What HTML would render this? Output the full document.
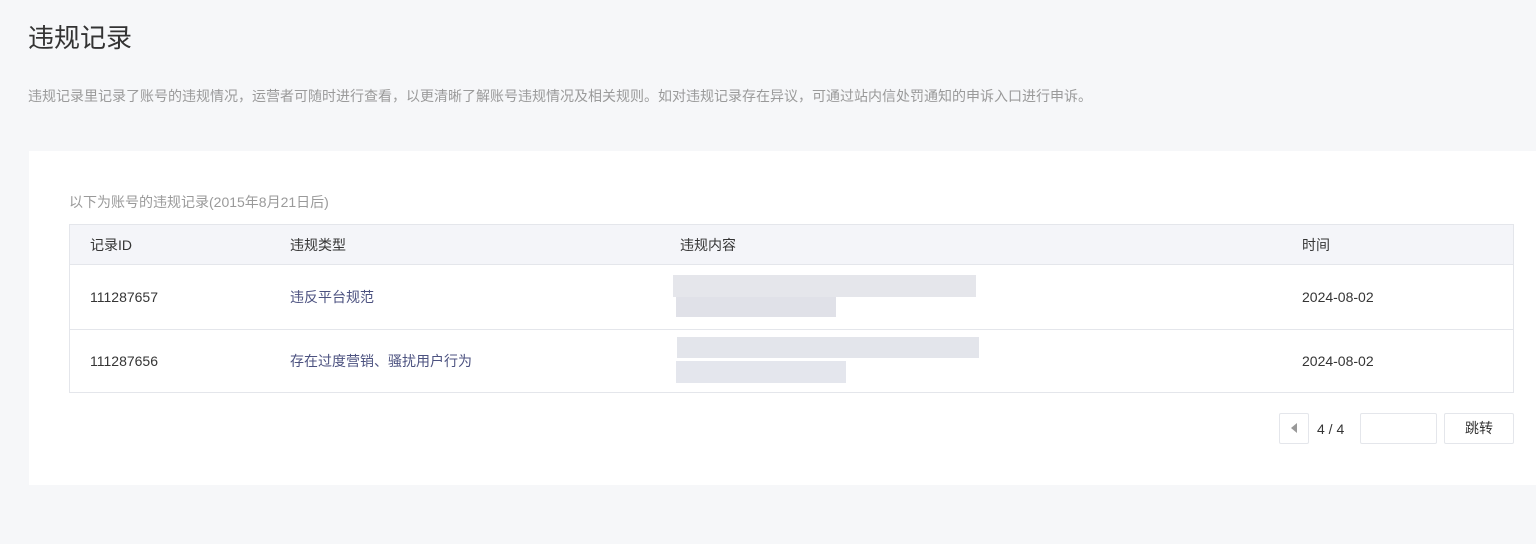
<!DOCTYPE html>
<html><head><meta charset="utf-8"><style>
*{margin:0;padding:0;box-sizing:border-box}
body{width:1536px;height:544px;background:#f6f7f9;font-family:"Liberation Sans","Noto Sans CJK SC",sans-serif;position:relative;overflow:hidden;color:#353535}
.a{position:absolute;white-space:nowrap}
.b{position:absolute}
</style></head><body>
<div class="a" style="left:28px;top:22px;font-size:26px;color:#333;line-height:32px">违规记录</div>
<div class="a" style="left:28px;top:86px;font-size:14px;color:#9a9a9a;line-height:20px">违规记录里记录了账号的违规情况，运营者可随时进行查看，以更清晰了解账号违规情况及相关规则。如对违规记录存在异议，可通过站内信处罚通知的申诉入口进行申诉。</div>
<div class="b" style="left:29px;top:151px;width:1507px;height:334px;background:#fff"></div>
<div class="a" style="left:69px;top:192px;font-size:14px;color:#9a9a9a;line-height:20px">以下为账号的违规记录(2015年8月21日后)</div>
<div class="b" style="left:69px;top:224px;width:1445px;height:169px;border:1px solid #e4e6eb"></div>
<div class="b" style="left:70px;top:225px;width:1443px;height:40px;background:#f4f5f9;border-bottom:1px solid #e4e6eb"></div>
<div class="b" style="left:70px;top:329px;width:1443px;height:1px;background:#e4e6eb"></div>
<div class="a" style="left:90px;top:235px;font-size:14px;line-height:20px">记录ID</div>
<div class="a" style="left:290px;top:235px;font-size:14px;line-height:20px">违规类型</div>
<div class="a" style="left:680px;top:235px;font-size:14px;line-height:20px">违规内容</div>
<div class="a" style="left:1302px;top:235px;font-size:14px;line-height:20px">时间</div>
<div class="a" style="left:90px;top:287px;font-size:14px;line-height:20px">111287657</div>
<div class="a" style="left:290px;top:287px;font-size:14px;line-height:20px;color:#4c5280">违反平台规范</div>
<div class="a" style="left:1302px;top:287px;font-size:14px;line-height:20px">2024-08-02</div>
<div class="a" style="left:90px;top:351px;font-size:14px;line-height:20px">111287656</div>
<div class="a" style="left:290px;top:351px;font-size:14px;line-height:20px;color:#4c5280">存在过度营销、骚扰用户行为</div>
<div class="a" style="left:1302px;top:351px;font-size:14px;line-height:20px">2024-08-02</div>
<div class="b" style="left:673px;top:275px;width:303px;height:22px;background:#e5e6eb"></div>
<div class="b" style="left:676px;top:297px;width:160px;height:20px;background:#e0e1e8"></div>
<div class="b" style="left:677px;top:337px;width:302px;height:21px;background:#e3e5eb"></div>
<div class="b" style="left:676px;top:361px;width:170px;height:22px;background:#e4e6ed"></div>
<div class="b" style="left:1279px;top:413px;width:30px;height:31px;border:1px solid #e4e6eb;border-radius:2px"></div>
<div class="b" style="left:1291px;top:423px;width:0;height:0;border-top:5px solid transparent;border-bottom:5px solid transparent;border-right:6px solid #999"></div>
<div class="a" style="left:1317px;top:419px;font-size:14px;line-height:20px">4 / 4</div>
<div class="b" style="left:1360px;top:413px;width:77px;height:31px;border:1px solid #e4e6eb;border-radius:2px"></div>
<div class="b" style="left:1444px;top:413px;width:70px;height:31px;border:1px solid #e4e6eb;border-radius:2px;font-size:14px;line-height:29px;text-align:center">跳转</div>
</body></html>
